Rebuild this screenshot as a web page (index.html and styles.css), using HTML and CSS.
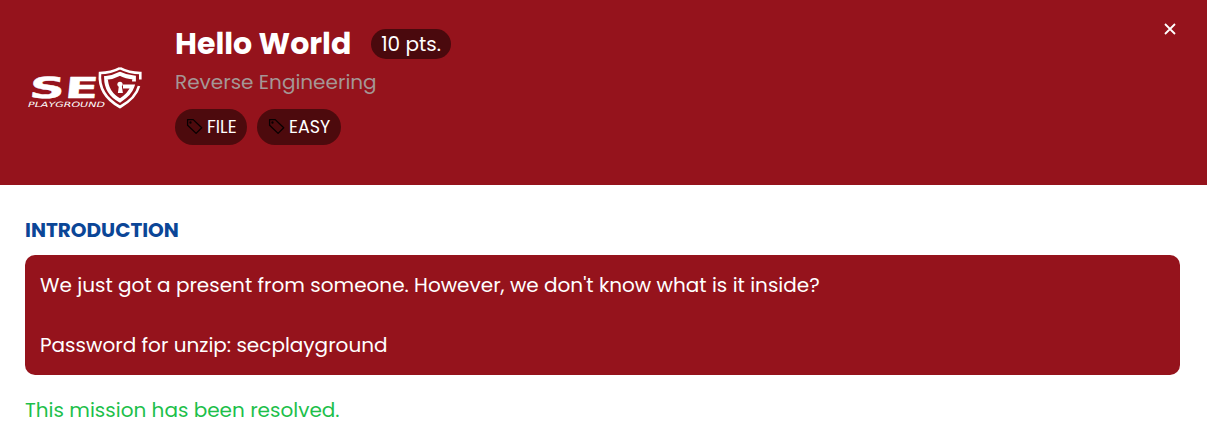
FILE: index.html
```html
<!DOCTYPE html>
<html lang="en">
<head>
<meta charset="utf-8">
<title>Hello World</title>
<link rel="stylesheet" href="styles.css">
</head>
<body>
<header class="hero">
  <svg class="logo" viewBox="0 0 120 45" role="img" aria-label="SEC Playground">
    <text class="logo-main" x="7" y="33.5" textLength="69" lengthAdjust="spacingAndGlyphs" transform="skewX(-6)">SE</text>
    <text class="logo-sub" x="3" y="42.3" textLength="77" lengthAdjust="spacingAndGlyphs">PLAYGROUND</text>
    <path class="shield" d="M95 3.2Q86 8 75 8Q73 30 95 42Q111 33 114 21"/>
    <path class="shield" d="M95 3.2Q104 8 115.3 8V14.5"/>
    <path class="shield-inner" d="M109 16.5V12.5Q101 12 95 8.8Q88 12.5 81 12.8Q81 28 95 35.5Q105 29 107.5 21.5H98"/>
    <circle class="keyhole" cx="95" cy="19.3" r="2.6"/>
    <path class="keyhole" d="M94 20h2.6l1.3 8h-5z"/>
  </svg>
  <div class="summary">
    <div class="title-row">
      <h1 class="title">Hello World</h1>
      <span class="points">10 pts.</span>
    </div>
    <div class="category">Reverse Engineering</div>
    <div class="tags">
      <span class="tag file"><svg class="tag-icon" viewBox="0 0 16 16"><path d="M1.5 1.5h5.3L14.8 9.2 9.5 14.5 1.5 6.8z"/><circle cx="4.2" cy="4.2" r=".5"/></svg><span class="tag-text">FILE</span></span>
      <span class="tag easy"><svg class="tag-icon" viewBox="0 0 16 16"><path d="M1.5 1.5h5.3L14.8 9.2 9.5 14.5 1.5 6.8z"/><circle cx="4.2" cy="4.2" r=".5"/></svg><span class="tag-text">EASY</span></span>
    </div>
  </div>
  <button class="close" aria-label="Close"><svg viewBox="0 0 12 12"><path d="M1 1l10 10M11 1L1 11"/></svg></button>
</header>
<main class="content">
  <h2 class="heading">INTRODUCTION</h2>
  <div class="intro">
    <p class="question">We just got a present from someone. However, we don't know what is it inside?</p>
    <p class="password">Password for unzip: secplayground</p>
  </div>
  <p class="status"><span>This mission has been resolved.</span></p>
</main>
</body>
</html>
```
FILE: styles.css
```css
* { box-sizing: border-box; }
body { margin: 0; background: #fff; font: 20px/30px Poppins, Inter, sans-serif; color: #fff; }
h1, h2, p { margin: 0; }
.hero { display: flex; align-items: flex-start; height: 185px; padding: 25px 30px 0 25px; background: #95131c; }
.logo { width: 120px; height: 45px; margin-top: 40px; fill: #fff; }
.logo-main { font: bold 29px "DejaVu Sans", sans-serif; stroke: #fff; stroke-width: .4; stroke-linejoin: round; }
.logo-sub { font: italic 7.3px "DejaVu Sans", sans-serif; }
.shield { fill: none; stroke: #fff; stroke-width: 2.6; }
.shield-inner { fill: none; stroke: #fff; stroke-width: 3.8; }
.keyhole { fill: #fff; }
.summary { margin-left: 30px; }
.title-row { display: flex; align-items: center; height: 38px; gap: 21px; }
.title { width: 175px; font-size: 30px; line-height: 38px; font-weight: 700; white-space: nowrap; }
.points { width: 80px; height: 30px; margin-top: -1px; border-radius: 15px; background: #4a090d; text-align: center; white-space: nowrap; }
.category { height: 30px; margin-top: 4px; color: #a59695; }
.tags { display: flex; gap: 10px; margin-top: 12px; }
.tag { display: flex; align-items: center; height: 36px; padding-left: 10px; border-radius: 18px; background: #4d0a0d; font-size: 17.5px; font-weight: 400; }
.file { width: 72px; }
.easy { width: 84px; }
.tag-icon { width: 17px; height: 17px; margin: -2px 4px 0 1px; fill: none; stroke: #080001; stroke-width: 1.2; stroke-linejoin: round; }
.close { display: flex; margin: -2px 0 0 auto; padding: 0; border: 0; background: none; }
.close svg { width: 14px; height: 12px; fill: none; stroke: #fff; stroke-width: 1.8; }
.content { padding: 30px 27px 0 25px; }
.heading { color: #0b4697; font-size: 20px; line-height: 30px; font-weight: 700; }
.intro { height: 120px; margin-top: 10px; padding: 15px; border-radius: 10px; background: #95131c; }
.password { margin-top: 30px; }
.status { margin-top: 20px; color: #1dbf4b; }
```
